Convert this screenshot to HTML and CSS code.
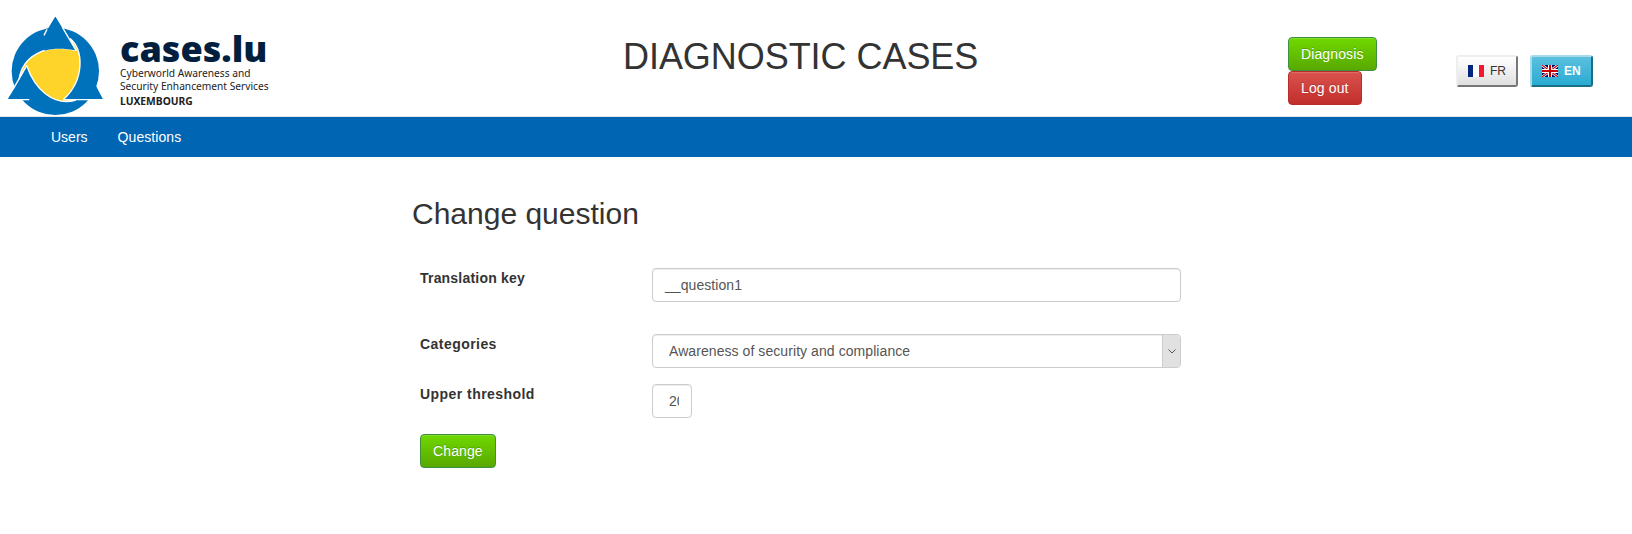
FILE: index.html
```html
<!DOCTYPE html>
<html lang="en">
<head>
<meta charset="utf-8">
<title>Diagnostic CASES</title>
<link rel="stylesheet" href="styles.css">
</head>
<body>
<header class="header">
  <a class="brand">
    <svg class="brand-mark" viewBox="24 48 288 300" width="96" height="100">
      <circle cx="166" cy="214" r="131" fill="#0072bc"/>
      <path d="M211 116 C250 146 256 238 191 298 L226 301 C160 318 106 270 80 197 L57 240 C66 170 132 130 228 151Z" fill="#ffd42a" stroke="#fff" stroke-width="4" stroke-linejoin="round"/>
      <path d="M166 50 L228 151 C196 145 160 144 134 152 L132 106Z M24 297 L80 200 L92 297Z M308 297 H232 L258 208Z" fill="#0072bc"/>
      <path d="M186 80 L228 151 M80 197 L30 284 M191 299 H272 M52 299 H88 M132 106 L141 88" fill="none" stroke="#fff" stroke-width="4"/>
      <path d="M278 238 L308 297 H262Z M166 50 L186 83 L150 92 L145 86Z M24 297 L42 267 L58 297Z" fill="#0072bc"/>
    </svg>
    <span class="brand-text">
      <strong class="brand-name">cases.lu</strong>
      <span class="brand-line">Cyberworld Awareness and</span>
      <span class="brand-line">Security Enhancement Services</span>
      <b class="brand-country">LUXEMBOURG</b>
    </span>
  </a>
  <h1 class="title">DIAGNOSTIC CASES</h1>
  <div class="actions">
    <button class="btn btn-success">Diagnosis</button>
    <button class="btn btn-danger">Log out</button>
  </div>
  <div class="languages">
    <button class="lang">
      <svg width="16" height="12" viewBox="0 0 16 12"><path fill="#fff" d="M0 0h16v12H0z"/><path fill="#00267f" d="M0 0h5v12H0z"/><path fill="#f31830" d="M11 0h5v12h-5z"/></svg>FR
    </button>
    <button class="lang lang-active">
      <svg width="16" height="12" viewBox="0 0 16 12"><path fill="#006" d="M0 0h16v12H0z"/><path stroke="#fff" stroke-width="2.6" d="M0 0l16 12M16 0L0 12"/><path stroke="#c00" stroke-width="1.1" d="M0 0l16 12M16 0L0 12"/><path stroke="#fff" stroke-width="4" d="M8 0v12M0 6h16"/><path stroke="#c00" stroke-width="2" d="M8 0v12M0 6h16"/></svg>EN
    </button>
  </div>
</header>
<nav class="nav"><a>Users</a><a class="nav-wide">Questions</a></nav>
<main class="content">
  <h2 class="heading">Change question</h2>
  <form class="form">
    <label class="label">Translation key</label>
    <div class="control control-key">__question1</div>
    <label class="label label-wide">Categories</label>
    <div class="control control-select">Awareness of security and compliance
      <span class="arrow"><svg width="8" height="5" viewBox="0 0 8 5" fill="none" stroke="#555"><path d="M.5 .5L4 4L7.500 .5"/></svg></span>
    </div>
    <label class="label label-wide">Upper threshold</label>
    <div class="control control-small"><span class="clip">20</span></div>
    <button class="btn btn-success submit" type="button">Change</button>
  </form>
</main>
</body>
</html>
```
FILE: styles.css
```css
* { box-sizing: border-box; }
body { margin: 0; background: #fff; color: #333; font: 14px/20px "Liberation Sans", Arial, sans-serif; }
h1, h2 { margin: 0; font-weight: 400; }
.header { display: flex; align-items: flex-start; height: 117px; border-bottom: 1px solid #e5e5e5; }
.brand { display: flex; width: 623px; padding: 16px 0 0 8px; }
.brand-mark { flex: none; }
.brand-text { display: flex; flex-direction: column; align-items: flex-start; padding: 12px 0 0 16px; font-family: "Noto Sans", sans-serif; color: #222; }
.brand-name { height: 39px; font: 800 36px/41px "Open Sans", sans-serif; color: #031f3f; }
.brand-line { font-size: 10.2px; line-height: 13px; white-space: nowrap; }
.brand-country { font-size: 10.3px; line-height: 16px; }
.title { width: 665px; padding-top: 37px; font-size: 36px; line-height: 40px; letter-spacing: -.05px; white-space: nowrap; }
.actions { display: flex; flex-direction: column; align-items: flex-start; width: 168px; padding-top: 37px; }
.btn { height: 34px; padding: 6px 12px; border: 1px solid; border-radius: 4px; color: #fff; font: 14px/20px "Liberation Sans", Arial, sans-serif; letter-spacing: .12px; text-shadow: 0 -1px 0 rgba(0,0,0,.2); box-shadow: inset 0 1px 0 rgba(255,255,255,.15); }
.btn-success { border-color: #3e8f3e; background: linear-gradient(#70d800, #58a800); }
.btn-danger { border-color: #b92c28; background: linear-gradient(#d9534f, #c12e2a); }
.languages { display: flex; gap: 12px; padding-top: 55px; }
.lang { display: flex; align-items: center; gap: 6px; width: 62px; height: 32px; padding: 0 0 0 10px; border: 2px solid; border-color: #eee #777 #777 #eee; border-radius: 3px; background: linear-gradient(#fff, #e0e0e0); color: #333; font: 12px/18px "Liberation Sans", Arial, sans-serif; }
.lang-active { width: 63px; border-color: #a5dceb #1a6e88 #1a6e88 #a5dceb; background: linear-gradient(#5bc0de, #2aabd2); color: #fff; font-weight: 700; }
.nav { display: flex; gap: 30px; height: 40px; padding: 10px 51px; background: #0066b3; color: #fff; }
.nav-wide { letter-spacing: .08px; }
.content { width: 808px; margin-left: 412px; padding-top: 40px; }
.heading { font-size: 30px; line-height: 33px; }
.form { display: grid; grid-template-columns: 232px 529px; grid-template-rows: 66px 50px 50px 34px; padding: 38px 8px 0; }
.label { font-weight: 700; letter-spacing: .2px; }
.label-wide { letter-spacing: .45px; }
.control { display: flex; height: 34px; padding: 6px 12px; border: 1px solid #ccc; border-radius: 4px; box-shadow: inset 0 1px 1px rgba(0,0,0,.075); color: #555; letter-spacing: .07px; }
.control-select { justify-content: space-between; overflow: hidden; padding: 0 0 0 16px; line-height: 32px; }
.arrow { display: flex; align-items: center; justify-content: center; width: 18px; background: #e1e1e1; border-left: 1px solid #ccc; }
.control-small { width: 40px; padding-left: 16px; }
.clip { width: 10px; overflow: hidden; }
.submit { justify-self: start; }
```
